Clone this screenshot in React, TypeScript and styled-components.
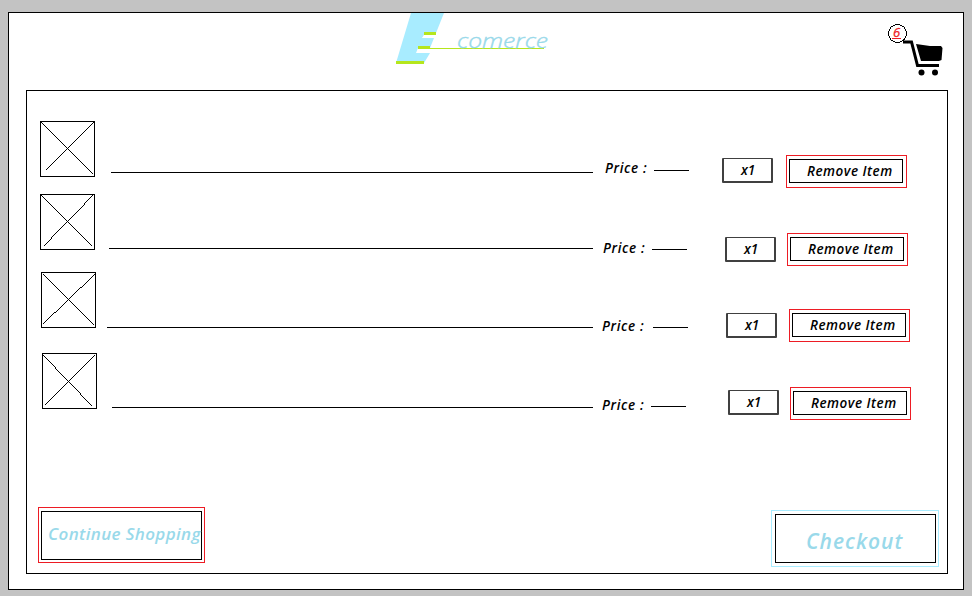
import React from 'react';
import styled, { createGlobalStyle } from 'styled-components';

const GlobalStyle = createGlobalStyle`
  * { box-sizing: border-box; }
  body { margin: 0; background: #c3c3c3; font-family: "Open Sans", "Noto Sans", sans-serif; font-style: italic; }
`;

const Screen = styled.div`
  width: 972px;
  height: 596px;
  padding: 12px 0 0 8px;
  overflow: hidden;
  background: #c3c3c3;
`;

const Page = styled.main`
  display: flex;
  flex-direction: column;
  width: 956px;
  height: 578px;
  border: 1px solid #000;
  background: #fff;
`;

const Header = styled.header`
  display: flex;
  justify-content: space-between;
  flex: none;
  height: 77px;
  padding: 0 18px 0 387px;
`;

const Art = styled.svg`
  display: block;
  flex: none;
`;

const Panel = styled.section`
  display: flex;
  flex-direction: column;
  width: 922px;
  height: 484px;
  margin-left: 17px;
  border: 1px solid #000;
`;

const Row = styled.article<{ $height: number }>`
  display: flex;
  align-items: flex-start;
  flex: none;
  height: ${(p) => p.$height}px;
`;

const Cell = styled.div<{ $gap: number; $top: number }>`
  flex: none;
  margin: ${(p) => p.$top}px 0 0 ${(p) => p.$gap}px;
`;

const Rule = styled.div<{ $width: number }>`
  width: ${(p) => p.$width}px;
  height: 1px;
  background: #000;
`;

const Price = styled.span`
  display: block;
  width: 44px;
  font-size: 13.5px;
  font-weight: 600;
  line-height: 18px;
  letter-spacing: 0.65px;
  white-space: pre;
`;

const Quantity = styled.div`
  width: 51px;
  height: 25px;
  padding-left: 17px;
  border: 2px solid #404040;
  border-top-width: 1px;
  border-radius: 1px;
  font-size: 13.5px;
  font-weight: 600;
  line-height: 22px;
`;

const Frame = styled.div<{ $color: string; $pad: string }>`
  flex: none;
  padding: ${(p) => p.$pad};
  border: 1px solid ${(p) => p.$color};
`;

const Button = styled.button`
  display: block;
  margin: 0;
  border: 1px solid #000;
  border-radius: 0;
  background: #fff;
  font-family: inherit;
  font-style: italic;
  text-align: left;
  white-space: nowrap;
`;

const RemoveButton = styled(Button)`
  width: 114px;
  height: 24px;
  padding: 0 0 0 17px;
  color: #000;
  font-size: 13.5px;
  font-weight: 600;
  line-height: 22px;
  letter-spacing: 0.5px;
`;

const Footer = styled.footer`
  display: flex;
  justify-content: space-between;
  align-items: flex-start;
  margin-top: auto;
  height: 66px;
  padding: 0 8px 0 11px;
`;

const FooterButton = styled(Button)<{ $size: number; $indent: number; $spacing: number; $pad: string }>`
  width: 161px;
  height: 49px;
  padding: ${(p) => p.$pad};
  padding-left: ${(p) => p.$indent}px;
  color: #99d9ea;
  font-size: ${(p) => p.$size}px;
  font-weight: 600;
  line-height: 42px;
  letter-spacing: ${(p) => p.$spacing}px;
`;

const FooterSlot = styled.div<{ $top: number }>`
  margin-top: ${(p) => p.$top}px;
`;

function Logo() {
  return (
    <Art width="158" height="52" viewBox="396 13 158 52">
      <path d="M411 13H444L436 33L424 35L422 38H434L430 48H418L416 53H430L424 63H396Z" fill="#a8ecff" />
      <path d="M424 35H436V38H422.5ZM418 49H432V52H430L417 53Z" fill="#fff" />
      <g fill="#b5e61d" shapeRendering="crispEdges">
        <path d="M424 32h12v3h-12zM418 46h12v3h-12zM396 61h28v3h-28zM430 48h114v1H430z" />
      </g>
      <text x="457" y="47.5" fontSize="20" fontWeight="300" textLength="91" lengthAdjust="spacingAndGlyphs" fill="#99d9ea" stroke="#99d9ea" strokeWidth=".4">comerce</text>
    </Art>
  );
}

function Cart() {
  return (
    <Art width="60" height="66" viewBox="885 13 60 66">
      <path d="M903 42H911.5L917.5 65.5H939" fill="none" stroke="#000" strokeWidth="3" />
      <path d="M916 44L930 46H941L942.5 48L941.5 60L939 61H921Z" />
      <circle cx="921.5" cy="72.5" r="3" />
      <circle cx="935" cy="72.5" r="3" />
      <circle cx="897.5" cy="33.5" r="9" fill="#fff" stroke="#000" shapeRendering="crispEdges" />
      <text x="893" y="37.4" fontSize="13" fill="#ed1c24" stroke="#ed1c24" strokeWidth=".3">6</text>
      <path d="M892 38h9v1h-9z" fill="#ed1c24" />
    </Art>
  );
}

function Thumbnail({ cross }: { cross: string }) {
  return (
    <Art width="55" height="56" viewBox="0 0 55 56" fill="none" stroke="#000" shapeRendering="crispEdges">
      <path d="M.5 .5H54.5V55.5H.5Z" />
      <path d={cross} transform="translate(.5 .5)" />
    </Art>
  );
}

// Horizontal values are distances from the panel's inner edge; vertical ones from the row's top.
const rows = [
  { height: 99, thumb: [13, 30], line: [84, 81, 482], price: [578, 68], dash: [627, 79], qty: [695, 67], remove: [759, 64], cross: 'M1 1L53 53M53 1L5 49' },
  { height: 78, thumb: [13, 4], line: [82, 58, 484], price: [576, 49], dash: [625, 59], qty: [698, 47], remove: [760, 43], cross: 'M1 1L52 52M53 0L44 9V10L27 27L11 43V44L3 52' },
  { height: 78, thumb: [14, 4], line: [80, 59, 486], price: [575, 49], dash: [626, 59], qty: [699, 45], remove: [762, 41], cross: 'M2 2L53 53M53 2L40 15H39L27 27L14 40H13L1 52' },
  { height: 84, thumb: [15, 7], line: [85, 61, 481], price: [575, 50], dash: [624, 60], qty: [701, 44], remove: [763, 41], cross: 'M1 2L13 14V15L27 29L38 40V41L50 53M52 2L27 27L2 52' },
];

export default function App() {
  return (
    <Screen>
      <GlobalStyle />
      <Page>
        <Header>
          <Logo />
          <Cart />
        </Header>
        <Panel>
          {rows.map((r, i) => (
            <Row key={i} $height={r.height}>
              <Cell $gap={r.thumb[0]} $top={r.thumb[1]}>
                <Thumbnail cross={r.cross} />
              </Cell>
              <Cell $gap={r.line[0] - r.thumb[0] - 55} $top={r.line[1]}>
                <Rule $width={r.line[2]} />
              </Cell>
              <Cell $gap={r.price[0] - r.line[0] - r.line[2]} $top={r.price[1]}>
                <Price>Price :</Price>
              </Cell>
              <Cell $gap={r.dash[0] - r.price[0] - 44} $top={r.dash[1]}>
                <Rule $width={35} />
              </Cell>
              <Cell $gap={r.qty[0] - r.dash[0] - 35} $top={r.qty[1]}>
                <Quantity>x1</Quantity>
              </Cell>
              <Cell $gap={r.remove[0] - r.qty[0] - 51} $top={r.remove[1]}>
                <Frame $color="#ed1c24" $pad="3px 3px 4px 2px">
                  <RemoveButton>Remove Item</RemoveButton>
                </Frame>
              </Cell>
            </Row>
          ))}
          <Footer>
            <FooterSlot $top={0}>
              <Frame $color="#ed1c24" $pad="3px 2px 2px 2px">
                <FooterButton $size={17} $indent={6} $spacing={0.36} $pad="0 0 3px">Continue Shopping</FooterButton>
              </Frame>
            </FooterSlot>
            <FooterSlot $top={3}>
              <Frame $color="#a8ecff" $pad="3px 2px 3px 3px">
                <FooterButton $size={21} $indent={30} $spacing={1} $pad="5px 0 0">Checkout</FooterButton>
              </Frame>
            </FooterSlot>
          </Footer>
        </Panel>
      </Page>
    </Screen>
  );
}
